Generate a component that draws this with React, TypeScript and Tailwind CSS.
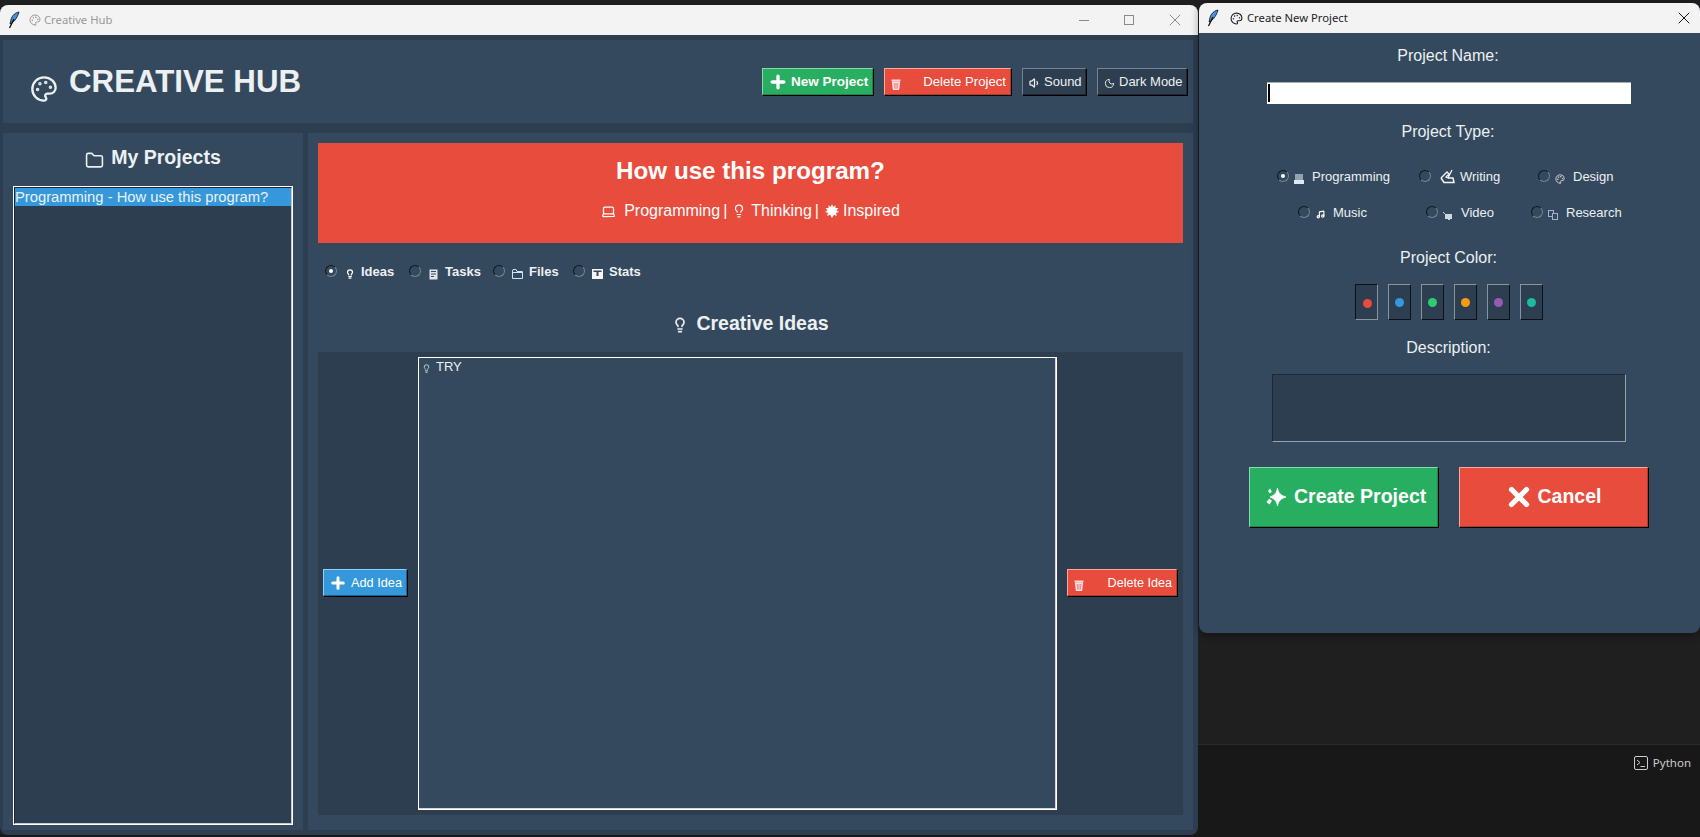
import React from 'react';
import { Folder, Laptop, Lightbulb, Moon, Music, Palette, Plus, Volume1, X } from 'lucide-react';

const ARIAL = "font-['Liberation_Sans',Arial,sans-serif]";

function Feather() {
  return (
    <svg width="12" height="18" viewBox="0 0 12 18" className="shrink-0">
      <path d="M11 1C6 2 3 6 2.500 11L2 13C5 12 9 8 11 1Z" fill="#4a90e2" stroke="#0b0b0b" strokeWidth="0.800" />
      <path d="M6 8L1.500 17" stroke="#0b0b0b" strokeWidth="1.200" fill="none" />
    </svg>
  );
}

function Trash() {
  return (
    <svg width="10" height="11" viewBox="0 0 10 11" className="shrink-0">
      <path d="M0.500 0.500H9.500V2.500H0.500Z" fill="#ffd5d5" />
      <path d="M1.500 3H8.500L7.800 10.500H2.200Z" fill="#ffc4cc" stroke="#fff" strokeWidth="0.800" />
      <path d="M3.500 4V9.500M5 4V9.500M6.500 4V9.500" stroke="#e8827c" strokeWidth="0.700" />
    </svg>
  );
}

function TasksIcon() {
  return (
    <svg width="9" height="11" viewBox="0 0 9 11" className="shrink-0 mt-[6px]">
      <rect x="0.500" y="0.500" width="8" height="10" fill="#dfe6ea" />
      <path d="M2 2.500H7M2 5H7M2 7.500H5" stroke="#34495e" strokeWidth="1" />
    </svg>
  );
}

function FilesIcon() {
  return (
    <svg width="11" height="10" viewBox="0 0 11 10" className="shrink-0 mt-[6px]">
      <path d="M0.500 2V9.500H10.500V2.500H5L4 0.500H1Z" fill="none" stroke="#c9e6f2" strokeWidth="1" />
      <path d="M0.500 3.500H10.500" stroke="#c9e6f2" strokeWidth="1" />
    </svg>
  );
}

function StatsIcon() {
  return (
    <svg width="11" height="10" viewBox="0 0 11 10" className="shrink-0 mt-[6px]">
      <rect width="11" height="10" fill="#f4f6f7" />
      <path d="M1.500 1.500H9.500V3H6.500V7H4.500V3H1.500Z" fill="#34495e" />
    </svg>
  );
}

function Burst() {
  return (
    <svg width="14" height="14" viewBox="0 0 14 14" className="shrink-0">
      <path d="M7 0L8.200 3L10.500 1.200L10.400 4L13.500 4L11.500 6.200L14 8L11 8.700L11.800 12L9 10.800L7 14L5.200 10.800L2.200 12L3 8.700L0 8L2.500 6.200L0.500 4L3.600 4L3.500 1.200L5.800 3Z" fill="#fff" />
    </svg>
  );
}

function WritingIcon() {
  return (
    <svg width="15" height="15" viewBox="0 0 15 15" className="shrink-0">
      <path d="M1 9L7 3L9 5L6 8L8 9L12 1" fill="none" stroke="#f4f6f7" strokeWidth="1.300" />
      <path d="M1 9L4 13.500H14L13 9H8" fill="none" stroke="#f4f6f7" strokeWidth="1.500" />
    </svg>
  );
}

function LaptopSmall() {
  return (
    <svg width="10" height="10" viewBox="0 0 10 10" className="shrink-0 mt-[6px]">
      <rect x="1" y="0" width="8" height="6" fill="#8ea4b3" />
      <rect x="0" y="6" width="10" height="4" fill="#dfe9ef" />
    </svg>
  );
}

function VideoIcon() {
  return (
    <svg width="10" height="8" viewBox="0 0 10 8" className="shrink-0 mt-[7px]">
      <rect x="2" y="2" width="7" height="5" fill="#cfd8dc" />
      <path d="M0 0L3 3M6 7L5 8H7Z" stroke="#cfd8dc" strokeWidth="1" />
    </svg>
  );
}

function ResearchIcon() {
  return (
    <svg width="10" height="10" viewBox="0 0 10 10" className="shrink-0 mt-[6px]">
      <rect x="0.500" y="0.500" width="5" height="6" fill="none" stroke="#9fb2d6" />
      <rect x="4.500" y="3.500" width="5" height="6" fill="#34495e" stroke="#9fb2d6" />
    </svg>
  );
}

function Sparkle() {
  return (
    <svg width="20" height="18" viewBox="0 0 20 18" className="shrink-0">
      <path d="M11.500 0C12.500 5 14 7 20 9C14 11 12.500 13 11.500 18C10.500 13 9 11 4 9C9 7 10.500 5 11.500 0Z" fill="#fff" stroke="#fff" strokeWidth="0.800" />
      <path d="M4 0.500L5.800 3.500L3.800 5.500L2 3Z" fill="#fff" />
      <path d="M3.500 10.500L6 13L3.500 16.500L0.500 14Z" fill="#fff" />
    </svg>
  );
}

function Radio({ on = false }: { on?: boolean }) {
  return (
    <span className="flex h-[12px] w-[12px] shrink-0 items-center justify-center rounded-full border border-[#10171d] border-r-[#77838e] border-b-[#77838e]">
      {on && <span className="h-[4px] w-[4px] rounded-full bg-white" />}
    </span>
  );
}

function TkButton({ className, children }: { className: string; children: React.ReactNode }) {
  return (
    <button className={`flex items-center border shadow-[1px_1px_0_#000] ${ARIAL} ${className}`}>
      {children}
    </button>
  );
}

function TitleBar({ muted, title, children }: { muted?: boolean; title: string; children: React.ReactNode }) {
  return (
    <div className="flex h-[30px] shrink-0 items-center rounded-t-lg bg-[#f3f3f3] pl-[8px]">
      <Feather />
      <Palette size={muted ? 12 : 13} className={`shrink-0 ${muted ? 'ml-[9px] text-[#999]' : 'ml-[11px] text-[#222]'}`} />
      <span className={`font-['Noto_Sans',sans-serif] text-[11.250px] ${muted ? 'ml-[3px] text-[#999]' : 'ml-[4px] text-[#222]'}`}>{title}</span>
      {children}
    </div>
  );
}

const TABS = [
  { label: 'Ideas', icon: <Lightbulb size={10} strokeWidth={3} className="mt-[6px] shrink-0 text-white" />, width: 'w-[84px]', on: true },
  { label: 'Tasks', icon: <TasksIcon />, width: 'w-[84px]', on: false },
  { label: 'Files', icon: <FilesIcon />, width: 'w-[80px]', on: false },
  { label: 'Stats', icon: <StatsIcon />, width: 'w-[80px]', on: false },
];

const COLORS = [
  { dot: 'bg-[#e74c3c]', on: true },
  { dot: 'bg-[#3498db]', on: false },
  { dot: 'bg-[#2ecc71]', on: false },
  { dot: 'bg-[#f39c12]', on: false },
  { dot: 'bg-[#9b59b6]', on: false },
  { dot: 'bg-[#1abc9c]', on: false },
];

function TypeOption({ label, icon, gap, on, width }: { label: string; icon: React.ReactNode; gap: string; on?: boolean; width: string }) {
  return (
    <div className={`flex h-[20px] items-center ${width}`}>
      <Radio on={on} />
      <span className={`flex justify-center ${gap}`}>{icon}</span>
      <span className="ml-[5px] text-[13px] leading-none text-[#ecf0f1]">{label}</span>
    </div>
  );
}

export default function App() {
  return (
    <div className={`relative h-[837px] w-[1700px] overflow-hidden bg-[#1f1f1f] ${ARIAL}`}>
      {/* terminal strip behind the windows */}
      <div className="absolute left-[1100px] top-[744px] flex h-[93px] w-[600px] justify-end border-t border-[#2b2b2b] bg-[#181818] pr-[9px] pt-[8px]">
        <div className="flex h-[20px] items-center gap-[5px] text-[#cccccc]">
          <svg width="14" height="14" viewBox="0 0 14 14">
            <rect x="0.500" y="0.500" width="13" height="13" rx="1.500" fill="none" stroke="#cccccc" />
            <path d="M3 4L6 6.500L3 9M6.500 10.500H11" fill="none" stroke="#cccccc" />
          </svg>
          <span className="font-['Noto_Sans',sans-serif] text-[11.500px]">Python</span>
        </div>
      </div>
      <div className="absolute left-0 top-[835px] h-[2px] w-[1100px] bg-[#181818]" />

      {/* main window */}
      <div className="absolute left-0 top-[5px] flex h-[830px] w-[1198px] flex-col rounded-lg bg-[#2c3e50]">
        <TitleBar muted title="Creative Hub">
          <div className="ml-auto flex items-center pr-[13px] text-[#8a8a8a]">
            <span className="h-px w-[10px] bg-[#8a8a8a]" />
            <span className="ml-[35px] h-[10px] w-[10px] border border-[#8a8a8a]" />
            <X size={20} strokeWidth={1.200} className="ml-[31px]" />
          </div>
        </TitleBar>
        <div className="flex min-h-0 flex-1 flex-col pl-[3px] pr-[5px] pt-[5px]">
          <header className="flex h-[83px] shrink-0 items-center bg-[#34495e] pl-[27px] pr-[6px]">
            <Palette size={28} className="mt-[14px] shrink-0 text-[#ecf0f1]" />
            <h1 className="ml-[11px] text-[31.250px] font-bold leading-none text-[#ecf0f1]">CREATIVE HUB</h1>
            <div className="ml-auto flex gap-[11px]">
              <TkButton className="h-[27px] w-[111px] border-[#7fe0a8] border-b-[#1e8449] border-r-[#1e8449] bg-[#27ae60] pl-[5px] text-[13.500px] font-bold text-white">
                <Plus size={20} strokeWidth={4} />
                <span className="ml-[3px] pt-px">New Project</span>
              </TkButton>
              <TkButton className="h-[27px] w-[127px] justify-between border-[#f5a99f] border-b-[#b03a2e] border-r-[#b03a2e] bg-[#e74c3c] pl-[6px] pr-[4px] text-[13.200px] text-white">
                <span className="mt-[5px]"><Trash /></span>
                <span>Delete Project</span>
              </TkButton>
              <TkButton className="h-[27px] w-[64px] border-[#77838e] border-b-[#1c2833] border-r-[#1c2833] bg-[#2c3e50] pl-[6px] text-[13px] text-[#ecf0f1]">
                <Volume1 size={12} strokeWidth={2.500} className="mt-[3px] shrink-0" />
                <span className="ml-[3px]">Sound</span>
              </TkButton>
              <TkButton className="h-[27px] w-[90px] border-[#77838e] border-b-[#1c2833] border-r-[#1c2833] bg-[#2c3e50] pl-[6px] text-[13px] text-[#ecf0f1]">
                <Moon size={11} strokeWidth={2} className="mt-[3px] shrink-0" />
                <span className="ml-[4px]">Dark Mode</span>
              </TkButton>
            </div>
          </header>

          <div className="mt-[10px] flex min-h-0 flex-1 gap-[5px] pb-[5px]">
            <aside className="flex w-[300px] shrink-0 flex-col bg-[#34495e] px-[10px] pb-[5px] pt-[13px]">
              <div className="flex h-[24px] items-center justify-center">
                <Folder size={19} className="mt-[4px] shrink-0 text-[#ecf0f1]" />
                <span className="ml-[7px] text-[19.500px] font-bold leading-none text-[#ecf0f1]">My Projects</span>
              </div>
              <div className="mt-[16px] min-h-0 flex-1 border border-white">
                <div className="h-full border border-[#1c2833] border-b-[#c9c9c9] border-r-[#c9c9c9] bg-[#2c3e50]">
                  <div className="flex h-[18px] items-center bg-[#3498db] text-[14.750px] text-[#ecf0f1]">
                    Programming - How use this program?
                  </div>
                </div>
              </div>
            </aside>

            <main className="flex min-w-0 flex-1 flex-col bg-[#34495e] px-[10px] pb-[15px] pt-[10px]">
              <div className="flex h-[100px] shrink-0 flex-col items-center bg-[#e74c3c] pt-[14px] text-white">
                <div className="text-[24.200px] font-bold leading-[28px]">How use this program?</div>
                <div className="mt-[16px] flex h-[20px] items-center text-[16px]">
                  <Laptop size={15} className="shrink-0" />
                  <span className="ml-[8px]">Programming</span>
                  <span className="ml-[3px]">|</span>
                  <Lightbulb size={14} className="ml-[5px] shrink-0" />
                  <span className="ml-[5px]">Thinking</span>
                  <span className="ml-[3px]">|</span>
                  <span className="ml-[6px]"><Burst /></span>
                  <span className="ml-[4px]">Inspired</span>
                </div>
              </div>

              <div className="ml-[7px] mt-[19px] flex h-[18px] shrink-0 items-center">
                {TABS.map((t) => (
                  <div key={t.label} className={`flex items-center ${t.width}`}>
                    <Radio on={t.on} />
                    <span className="flex w-[22px] justify-center pl-[3px]">{t.icon}</span>
                    <span className="ml-[2px] text-[13px] font-bold leading-none text-[#ecf0f1]">{t.label}</span>
                  </div>
                ))}
              </div>

              <div className="mt-[29px] flex h-[30px] shrink-0 items-center justify-center">
                <Lightbulb size={16} strokeWidth={2.500} className="mt-[2px] shrink-0 text-[#ecf0f1]" />
                <span className="ml-[8px] text-[19.500px] font-bold leading-none text-[#ecf0f1]">Creative Ideas</span>
              </div>

              <div className="mt-[13px] flex min-h-0 flex-1 bg-[#2c3e50]">
                <div className="flex w-[100px] shrink-0 items-center pb-[2px] pl-[5px]">
                  <TkButton className="h-[27px] w-[84px] border-[#8fd0f5] border-b-[#21618c] border-r-[#21618c] bg-[#3498db] pl-[5px] text-[12.750px] text-white">
                    <Plus size={18} strokeWidth={4} />
                    <span className="ml-[4px] pt-px">Add Idea</span>
                  </TkButton>
                </div>
                <div className="mb-[5px] mt-[5px] w-[639px] shrink-0 border border-white bg-[#34495e]">
                  <div className="h-full border-b border-r border-[#d5d5d5] pl-[3px] pt-px">
                    <div className="flex h-[16px] items-center text-[13px] text-[#ecf0f1]">
                      <Lightbulb size={9} className="mt-[3px] shrink-0" />
                      <span className="ml-[5px]">TRY</span>
                    </div>
                  </div>
                </div>
                <div className="flex flex-1 items-center pb-[2px] pl-[10px]">
                  <TkButton className="h-[27px] w-[110px] justify-between border-[#f5a99f] border-b-[#b03a2e] border-r-[#b03a2e] bg-[#e74c3c] pl-[6px] pr-[4px] text-[12.600px] text-white">
                    <span className="mt-[5px]"><Trash /></span>
                    <span className="pt-px">Delete Idea</span>
                  </TkButton>
                </div>
              </div>
            </main>
          </div>
        </div>
      </div>

      {/* create dialog */}
      <div className="absolute left-[1199px] top-[3px] flex h-[630px] w-[501px] flex-col rounded-lg bg-[#34495e] shadow-[0_2px_8px_rgba(0,0,0,0.400)]">
        <TitleBar title="Create New Project">
          <X size={20} strokeWidth={1.200} className="ml-auto mr-[6px] text-[#111]" />
        </TitleBar>
        <div className="flex flex-1 flex-col items-center">
          <div className="mt-[13px] h-[20px] pr-[3px] text-[16px] leading-[20px] text-[#ecf0f1]">Project Name:</div>
          <div className="mr-[1px] mt-[16px] flex h-[22px] w-[364px] border-t border-[#aaa] bg-white pl-px pt-px">
            <span className="h-[18px] w-[2px] bg-black" />
          </div>
          <div className="mt-[18px] h-[20px] pr-[3px] text-[16px] leading-[20px] text-[#ecf0f1]">Project Type:</div>

          <div className="mt-[24px] flex w-full pl-[78px]">
            <TypeOption width="w-[142px]" label="Programming" on gap="w-[18px] pl-[2px]" icon={<LaptopSmall />} />
            <TypeOption width="w-[119px]" label="Writing" gap="w-[24px] pl-[9px]" icon={<WritingIcon />} />
            <TypeOption width="w-[110px]" label="Design" gap="w-[18px] pl-[2px]" icon={<Palette size={10} className="mt-[5px] text-[#e8dfe6]" />} />
          </div>
          <div className="mt-[16px] flex w-full pl-[99px]">
            <TypeOption width="w-[128px]" label="Music" gap="w-[18px] pl-[2px]" icon={<Music size={9} strokeWidth={3} className="mt-[5px] text-white" />} />
            <TypeOption width="w-[105px]" label="Video" gap="w-[18px] pl-[2px]" icon={<VideoIcon />} />
            <TypeOption width="w-[110px]" label="Research" gap="w-[18px] pl-[2px]" icon={<ResearchIcon />} />
          </div>

          <div className="mt-[26px] h-[20px] pr-[2px] text-[16px] leading-[20px] text-[#ecf0f1]">Project Color:</div>
          <div className="mt-[16px] flex gap-[10px] pr-px">
            {COLORS.map((c) => (
              <div
                key={c.dot}
                className={`flex h-[36px] w-[23px] items-center justify-center border bg-[#2c3e50] ${
                  c.on
                    ? 'border-[#0c1116] border-b-[#8a949c] border-r-[#8a949c] pl-px pt-[2px]'
                    : 'border-[#8a949c] border-b-[#0c1116] border-r-[#0c1116]'
                }`}
              >
                <span className={`h-[9px] w-[9px] rounded-full ${c.dot}`} />
              </div>
            ))}
          </div>
          <div className="mt-[18px] h-[20px] pr-[2px] text-[16px] leading-[20px] text-[#ecf0f1]">Description:</div>
          <div className="mr-[2px] mt-[16px] h-[68px] w-[354px] border border-[#1c2833] border-b-[#9aa4ac] border-r-[#9aa4ac] bg-[#2c3e50]" />

          <div className="mt-[25px] flex gap-[21px] pr-[2px]">
            <TkButton className="h-[60px] w-[189px] border-[#7fe0a8] border-b-[#1e8449] border-r-[#1e8449] bg-[#27ae60] pl-[16px] text-[19.500px] font-bold text-white">
              <Sparkle />
              <span className="ml-[8px]">Create Project</span>
            </TkButton>
            <TkButton className="h-[60px] w-[189px] justify-center border-[#f5a99f] border-b-[#b03a2e] border-r-[#b03a2e] bg-[#e74c3c] pr-[2px] text-[19.500px] font-bold text-white">
              <X size={30} strokeWidth={4.200} className="shrink-0" />
              <span className="ml-[4px]">Cancel</span>
            </TkButton>
          </div>
        </div>
      </div>
    </div>
  );
}
